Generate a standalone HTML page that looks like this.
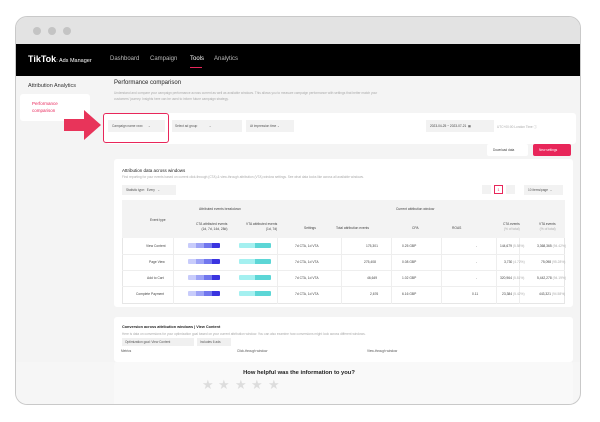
<!DOCTYPE html>
<html><head><meta charset="utf-8"><style>
*{margin:0;padding:0;box-sizing:border-box}
body{width:600px;height:422px;background:#fff;font-family:"Liberation Sans",sans-serif;position:relative;overflow:hidden;color:#222}
.a{position:absolute}
.t{font-size:3.2px;color:#aaa;white-space:nowrap}
.frame{left:15px;top:16px;width:566px;height:389px;border:1.5px solid #c9c9c9;border-radius:12px;background:#f4f4f4;overflow:hidden}
.dot{width:8px;height:8px;border-radius:50%;background:#c4c4c4;top:10px}
.card{background:#fff;border-radius:3px}
.th{font-size:3.3px;color:#444;white-space:nowrap}
.td{font-size:3.3px;color:#444;white-space:nowrap}
.bar{height:4.5px;border-radius:1px}
.star{font-size:13px;color:#ddd}
</style></head><body>
<div class="a frame">
 <div class="a" style="left:0;top:0;width:566px;height:27px;background:#e3e3e3"></div>
 <div class="a dot" style="left:17px"></div>
 <div class="a dot" style="left:32px"></div>
 <div class="a dot" style="left:47px"></div>
 <div class="a" style="left:0;top:27px;width:566px;height:32px;background:#000"></div>
 <div class="a" style="left:12px;top:37px;color:#fff;font-weight:bold;font-size:9px">TikTok<span style="font-weight:normal;font-size:5.5px">: Ads Manager</span></div>
 <div class="a" style="left:94px;top:39px;color:#bbb;font-size:6px">Dashboard</div>
 <div class="a" style="left:134px;top:39px;color:#bbb;font-size:6px">Campaign</div>
 <div class="a" style="left:174px;top:39px;color:#fff;font-size:6px">Tools</div>
 <div class="a" style="left:174px;top:50px;width:12px;height:1px;background:#e8265a"></div>
 <div class="a" style="left:198px;top:39px;color:#bbb;font-size:6px">Analytics</div>
 <div class="a" style="left:0;top:59px;width:88px;height:330px;background:#f4f4f4"></div>
 <div class="a" style="left:12px;top:66px;font-size:5.5px;color:#333">Attribution Analytics</div>
 <div class="a" style="left:4px;top:77px;width:70px;height:27px;background:#fff;border-radius:3px"></div>
 <div class="a" style="left:16px;top:83px;font-size:4.5px;color:#e8265a;line-height:7px">Performance<br>comparison</div>
 <div class="a" style="left:98px;top:63px;font-size:6px;color:#222">Performance comparison</div>
 <div class="a t" style="left:98px;top:73px;line-height:6px">Understand and compare your campaign performance across current as well as available windows. This allows you to measure campaign performance with settings that better match your<br>customers' journey. Insights here can be used to inform future campaign strategy.</div>
 <div class="a card" style="left:90px;top:96px;width:470px;height:31px"></div>
 <div class="a" style="left:87px;top:96px;width:66px;height:30px;border:1.5px solid #e8265a;border-radius:3px;background:#fff"></div>
 <div class="a" style="left:92px;top:103px;width:57px;height:12px;background:#f2f2f2"></div>
 <div class="a t" style="left:96px;top:107px;color:#555">Campaign name xxxx &nbsp;&nbsp;&nbsp;&nbsp;&nbsp;⌄</div>
 <div class="a" style="left:156px;top:103px;width:70px;height:12px;background:#f2f2f2"></div>
 <div class="a t" style="left:159px;top:107px;color:#555">Select ad group &nbsp;&nbsp;&nbsp;&nbsp;&nbsp;&nbsp;&nbsp;&nbsp;&nbsp;&nbsp;&nbsp;&nbsp;⌄</div>
 <div class="a" style="left:230px;top:103px;width:48px;height:12px;background:#f2f2f2"></div>
 <div class="a t" style="left:234px;top:107px;color:#555">At impression time ⌄</div>
 <div class="a" style="left:410px;top:103px;width:68px;height:12px;background:#f2f2f2"></div>
 <div class="a t" style="left:414px;top:107px;color:#444">2023-04-25 ~ 2023-07-21 &nbsp;▦</div>
 <div class="a t" style="left:481px;top:107px">UTC+00:00 London Time ⓘ</div>
 <div class="a" style="left:471px;top:127px;width:41px;height:12px;background:#fff;border-radius:2px"></div>
 <div class="a t" style="left:477px;top:131px;color:#444">Download data</div>
 <div class="a" style="left:517px;top:127px;width:38px;height:12px;background:#e8265a;border-radius:2px"></div>
 <div class="a t" style="left:523px;top:131px;color:#fff">New settings</div>
 <!-- attribution card -->
 <div class="a card" style="left:98px;top:142px;width:459px;height:148px"></div>
 <div class="a" style="left:106px;top:151px;font-size:4.5px;color:#222">Attribution data across windows</div>
 <div class="a t" style="left:106px;top:158px">Find reporting for your events based on current click-through (CTA) &amp; view-through attribution (VTA) window settings. See what data looks like across all available windows.</div>
 <div class="a" style="left:106px;top:168px;width:54px;height:10px;background:#f2f2f2"></div>
 <div class="a t" style="left:110px;top:171px;color:#555">Statistic type: &nbsp;Every &nbsp;&nbsp;⌄</div>
 <div class="a" style="left:466px;top:168px;width:9px;height:9px;background:#f2f2f2"></div>
 <div class="a" style="left:478px;top:168px;width:9px;height:9px;border:0.7px solid #e8265a;font-size:3.5px;color:#e8265a;text-align:center;line-height:8px">1</div>
 <div class="a" style="left:490px;top:168px;width:9px;height:9px;background:#f2f2f2"></div>
 <div class="a" style="left:508px;top:168px;width:39px;height:10px;background:#f2f2f2"></div>
 <div class="a t" style="left:512px;top:171px;color:#555">10 items/page &nbsp;⌄</div>
 <div class="a" style="left:106px;top:183px;width:443px;height:104px;border:0.7px solid #e6e6e6"></div>
 <div class="a" style="left:106px;top:183px;width:443px;height:38px;background:#f3f3f3"></div>
 <div class="a th" style="left:183px;top:190px">Attributed events breakdown</div>
 <div class="a th" style="left:380px;top:190px">Current attribution window</div>
 <div class="a th" style="left:134px;top:201px">Event type</div>
 <div class="a th" style="left:180px;top:205px;text-align:right;line-height:5px">CTA attributed events<br>(1d, 7d, 14d, 28d)</div>
 <div class="a th" style="left:230px;top:205px;text-align:right;line-height:5px">VTA attributed events<br>(1d, 7d)</div>
 <div class="a th" style="left:288px;top:209px">Settings</div>
 <div class="a th" style="left:320px;top:209px">Total attribution events</div>
 <div class="a th" style="left:396px;top:209px">CPA</div>
 <div class="a th" style="left:436px;top:209px">ROAS</div>
 <div class="a th" style="left:487px;top:205px;text-align:right;line-height:5px">CTA events<br><span style="color:#aaa">(% of total)</span></div>
 <div class="a th" style="left:523px;top:205px;text-align:right;line-height:5px">VTA events<br><span style="color:#aaa">(% of total)</span></div>
 <!-- rows -->
 <div class="a" style="left:106px;top:237px;width:443px;height:0.7px;background:#eee"></div>
 <div class="a" style="left:106px;top:253px;width:443px;height:0.7px;background:#eee"></div>
 <div class="a" style="left:106px;top:269px;width:443px;height:0.7px;background:#eee"></div>
 <div class="a" style="left:157px;top:221px;width:0.7px;height:66px;background:#eee"></div>
 <div class="a" style="left:261px;top:221px;width:0.7px;height:66px;background:#eee"></div>
 <div class="a" style="left:325px;top:221px;width:0.7px;height:66px;background:#eee"></div>
 <div class="a" style="left:375px;top:221px;width:0.7px;height:66px;background:#eee"></div>
 <div class="a" style="left:425px;top:221px;width:0.7px;height:66px;background:#eee"></div>
 <div class="a" style="left:480px;top:221px;width:0.7px;height:66px;background:#eee"></div>
 <div class="a" style="left:503px;top:221px;width:0.7px;height:66px;background:#eee"></div>

 <div class="a td" style="left:130px;top:227px">View Content</div>
 <div class="a td" style="left:133px;top:243px">Page View</div>
 <div class="a td" style="left:131px;top:259px">Add to Cart</div>
 <div class="a td" style="left:120px;top:275px">Complete Payment</div>

 <div class="a bar" style="left:172px;top:226px;width:32px;background:linear-gradient(90deg,#c8ccfb 0 25%,#9ea4f6 25% 50%,#7177ee 50% 75%,#3a34e0 75%)"></div>
 <div class="a bar" style="left:172px;top:242px;width:32px;background:linear-gradient(90deg,#c8ccfb 0 25%,#9ea4f6 25% 50%,#7177ee 50% 75%,#3a34e0 75%)"></div>
 <div class="a bar" style="left:172px;top:258px;width:32px;background:linear-gradient(90deg,#c8ccfb 0 25%,#9ea4f6 25% 50%,#7177ee 50% 75%,#3a34e0 75%)"></div>
 <div class="a bar" style="left:172px;top:274px;width:32px;background:linear-gradient(90deg,#c8ccfb 0 25%,#9ea4f6 25% 50%,#7177ee 50% 75%,#3a34e0 75%)"></div>
 <div class="a bar" style="left:223px;top:226px;width:32px;background:linear-gradient(90deg,#a4f0f0 0 50%,#5cd6d6 50%)"></div>
 <div class="a bar" style="left:223px;top:242px;width:32px;background:linear-gradient(90deg,#a4f0f0 0 50%,#5cd6d6 50%)"></div>
 <div class="a bar" style="left:223px;top:258px;width:32px;background:linear-gradient(90deg,#a4f0f0 0 50%,#5cd6d6 50%)"></div>
 <div class="a bar" style="left:223px;top:274px;width:32px;background:linear-gradient(90deg,#a4f0f0 0 50%,#5cd6d6 50%)"></div>

 <div class="a td" style="left:279px;top:227px">7d CTA, 1d VTA</div>
 <div class="a td" style="left:279px;top:243px">7d CTA, 1d VTA</div>
 <div class="a td" style="left:279px;top:259px">7d CTA, 1d VTA</div>
 <div class="a td" style="left:279px;top:275px">7d CTA, 1d VTA</div>
 <div class="a td" style="left:350px;top:227px">175,301</div>
 <div class="a td" style="left:348px;top:243px">275,408</div>
 <div class="a td" style="left:351px;top:259px">46,649</div>
 <div class="a td" style="left:354px;top:275px">2,676</div>
 <div class="a td" style="left:386px;top:227px">0.25 GBP</div>
 <div class="a td" style="left:386px;top:243px">0.08 GBP</div>
 <div class="a td" style="left:386px;top:259px">1.02 GBP</div>
 <div class="a td" style="left:386px;top:275px">6.16 GBP</div>
 <div class="a td" style="left:460px;top:227px">-</div>
 <div class="a td" style="left:460px;top:243px">-</div>
 <div class="a td" style="left:460px;top:259px">-</div>
 <div class="a td" style="left:456px;top:275px">0.11</div>
 <div class="a td" style="left:484px;top:227px">144,679 <span style="color:#aaa">(5.58%)</span></div>
 <div class="a td" style="left:488px;top:243px">3,730 <span style="color:#aaa">(4.72%)</span></div>
 <div class="a td" style="left:484px;top:259px">320,964 <span style="color:#aaa">(5.81%)</span></div>
 <div class="a td" style="left:486px;top:275px">23,384 <span style="color:#aaa">(5.42%)</span></div>
 <div class="a td" style="left:521px;top:227px">3,368,365 <span style="color:#aaa">(94.42%)</span></div>
 <div class="a td" style="left:525px;top:243px">75,098 <span style="color:#aaa">(95.28%)</span></div>
 <div class="a td" style="left:521px;top:259px">5,442,278 <span style="color:#aaa">(94.19%)</span></div>
 <div class="a td" style="left:523px;top:275px">443,321 <span style="color:#aaa">(94.58%)</span></div>

 <!-- conversion card -->
 <div class="a card" style="left:98px;top:300px;width:459px;height:45px"></div>
 <div class="a" style="left:106px;top:308px;font-size:3.8px;color:#222;font-weight:bold">Conversion across attribution windows | View Content</div>
 <div class="a t" style="left:106px;top:315px">Here is data on conversions for your optimization goal based on your current attribution window. You can also examine how conversions might look across different windows.</div>
 <div class="a" style="left:106px;top:321px;width:72px;height:8px;background:#f0f0f0"></div>
 <div class="a t" style="left:109px;top:323px;color:#555">Optimization goal: View Content</div>
 <div class="a" style="left:181px;top:321px;width:34px;height:8px;background:#f0f0f0"></div>
 <div class="a t" style="left:184px;top:323px;color:#555">Includes 6 ads</div>
 <div class="a t" style="left:105px;top:332px;color:#555">Metrics</div>
 <div class="a t" style="left:221px;top:332px;color:#555">Click-through window</div>
 <div class="a t" style="left:351px;top:332px;color:#555">View-through window</div>
 <!-- feedback -->
 <div class="a" style="left:98px;top:345px;width:459px;height:44px;background:#fafafa;border-radius:3px"></div>
 <div class="a" style="left:0;top:345px;width:566px;height:44px;background:rgba(248,248,248,.5)"></div>
 <div class="a" style="left:163px;top:353px;width:240px;text-align:center;font-size:5.8px;font-weight:bold;color:#222">How helpful was the information to you?</div>
 <div class="a star" style="left:186px;top:360px">★</div>
 <div class="a star" style="left:202px;top:360px">★</div>
 <div class="a star" style="left:219px;top:360px">★</div>
 <div class="a star" style="left:235px;top:360px">★</div>
 <div class="a star" style="left:252px;top:360px">★</div>
</div>
<svg class="a" style="left:64px;top:110px" width="38" height="30" viewBox="0 0 38 30"><path d="M0 9H20V0L37 15L20 30V21H0Z" fill="#e8345a"/></svg>
</body></html>
